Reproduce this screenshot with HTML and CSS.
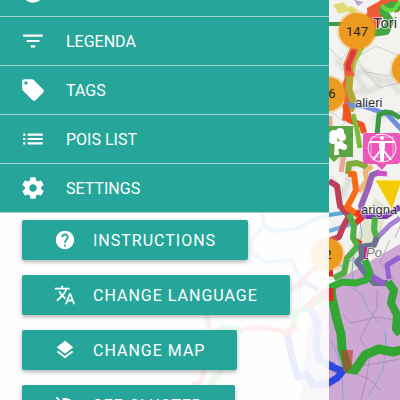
FILE: index.html
```html
<!DOCTYPE html>
<html lang="en">
<head>
    <title>Map</title>
    <meta charset="UTF-8">
    <meta name="viewport" content="width=device-width, initial-scale=1.0">
    <link rel="stylesheet" href="styles.css">
</head>
<body>
    <svg class="map" viewBox="0 0 400 400" preserveAspectRatio="xMinYMin slice" role="img" aria-label="Map">
        <defs>
            <filter id="soft"><feGaussianBlur stdDeviation="2"/></filter>
        </defs>
        <rect width="400" height="400" fill="#f2f2ef"/>
        <g filter="url(#soft)" fill="none" stroke="#dcdcd5" stroke-width="5">
            <path d="M348 75q14-8 26 2t20-6M352 92q20 2 28-8t20 10M335 60l18 12 14 20M372 120l20-8M332 150l20 20-10 30M0 240l25-8 20 10M10 290l30 12"/>
        </g>
        <path d="M355 240l20-42 14 10-16 44-28 26-15 2z" fill="#e1e4cf"/>
        <path d="M329 285L400 244V400H329L300 400L308 330z" fill="#cda8d2"/>
        <path d="M333 5l10-3 8 8-12 4zM345 10l6-4 7 4-5 5z" fill="#e2da72"/>
        <path d="M354 0l10 2-6 4z" fill="#b9a4cf"/>

        <!-- minor roads and streams -->
        <g class="roads">
            <path class="light" d="M329 48l12 12 8-10M352 60l24-14 24 10M341 70l16-7 23 25 20-6M358 60l8 12 22 4M331 112l14 10-10 14M331 175l12 14-6 20M345 178l20 12M360 100l26 16 14-4"/>
            <path d="M377 290v18l-9 15-8 16 10 14-3 23-6 24M329 368l39-3 32-6M329 373l20-2 20 8 12 12M343 314l7 9 28-6 22 4M390 240l-10 22 14 18M400 226l-5 12"/>
            <path class="light" d="M230 335l-22 32 34 30M270 345l20 40M90 240l40 20 20-10M110 330l60 12M60 290l30 18 20 30"/>
        </g>
        <g class="rivers">
            <path d="M353 288l10 8 4 12 8 10 5 5M385 330l1 16-3 24-8 15-7 12M331 340l6 14 5 14 1 32M352 232l8-12 2 16-8 14-2 22 3 16M329 260l12 6 14-8"/>
        </g>

        <!-- cycle routes -->
        <g class="routes">
            <path d="M329 24h14" stroke="#459845" stroke-width="4"/>
            <path d="M262 214l3 12 7 5 28-3 10-7 19-6 20-3" stroke="#5aa5dc" stroke-width="4"/>
            <path d="M262 228l-10 12-1 12 14 10 27-2 8 18M329 231l23-7" stroke="#72b2e2" stroke-width="4"/>
            <path d="M336 255l-8 1-38 35M206 314l4 16M205 370l-5 12-8 2" stroke="#dc5870" stroke-width="5"/>
            <path d="M290 291l15-9 13 8" stroke="#8672ae" stroke-width="5"/>
            <path d="M311 308l7 17-2 20 4 15 14 7" stroke="#4459e5" stroke-width="7"/>
            <path d="M287 333l6 29 5 15 9-3 6 11 14-1 10-6 6-7-14-5" stroke="#2e46df" stroke-width="7"/>
            <path d="M243 331l-20-4-8 5M222 370l-12 15M329 293l-19 14-14 5-4 16-5 5" stroke="#4eba50" stroke-width="6"/>
            <path d="M329 288l-14 10-10 10M297 327l-10 6-9-3-16-2-18 1" stroke="#ee5351" stroke-width="5"/>
            <path d="M358 31l14-17 13-12 10 1 4 8" stroke="#ef5a37" stroke-width="9"/>
            <path d="M367 8l11-6 7 5-7 23-10-6z" fill="#ef5a37"/>
            <path d="M371 33l15-2 4-10-7-10 9-6 8 4" stroke="#44a542" stroke-width="8"/>
            <path d="M382 5q5 8 13 4l5-8" stroke="#62dc3c" stroke-width="4"/>
            <path d="M360 46l-8 14-3 14" stroke="#9dcc3d" stroke-width="10"/>
            <path d="M355 48l-7 17 1 12" stroke="#ef7449" stroke-width="9"/>
            <path d="M355 48l-7 17 1 12" stroke="#d83939" stroke-width="5"/>
            <path d="M351 72l-5 14 2 15 -2 20" stroke="#ef6038" stroke-width="8"/>
            <path d="M350 76l-1 14 5 13-4 8" stroke="#b3a738" stroke-width="7"/>
            <path d="M346 105l17 1 12 4 12 4 15 16" stroke="#6d91dc" stroke-width="5"/>
            <path d="M377 135l2-20 6-3 7 1 8 5" stroke="#3b9a46" stroke-width="5"/>
            <path d="M345 104l4 16 13 5 2 8" stroke="#ed5420" stroke-width="6"/>
            <path d="M353 114l4 16 3 18" stroke="#82bb3c" stroke-width="5"/>
            <path d="M330 116v18M344 154l-3 18" stroke="#eba895" stroke-width="5"/>
            <path d="M329 181l8 5 3 20 9 10-6 11-4 10-10 4" stroke="#bd4058" stroke-width="6"/>
            <path d="M348 174l1-10 8-1 8 3 3 5" stroke="#83ac39" stroke-width="6"/>
            <path d="M372 166l-7 6 2 8-8 12" stroke="#f1b574" stroke-width="5"/>
            <path d="M348 174h6l2 16-5 10-4 7 12 9" stroke="#f66b17" stroke-width="6"/>
            <path d="M364 216l-8-4M352 226l13-11M354 240l7 4" stroke="#e83520" stroke-width="6"/>
            <path d="M380 172l-8 3-4 13-7 18 5 12" stroke="#9764b8" stroke-width="6"/>
            <path d="M377 173l10 1" stroke="#d44bcb" stroke-width="5"/>
            <path d="M366 216l20 0 14-9" stroke="#7d39b0" stroke-width="6"/>
            <path d="M400 218l-10 7-13 13" stroke="#a781d6" stroke-width="5"/>
            <path d="M349 214l5 12-1 12 5 8-11 12-3 15-10 5" stroke="#51ae46" stroke-width="6"/>
            <path d="M375 217l-1 13 3 8" stroke="#4eb34c" stroke-width="6"/>
            <path d="M377 237l-3 8-13 2 1 10-5 5 9 12 8 9h14" stroke="#68748f" stroke-width="6"/>
            <path d="M366 247v12" stroke="#bb2888" stroke-width="4"/>
            <path d="M364 263l6 12 14 9" stroke="#925dd0" stroke-width="6"/>
            <path d="M389 279l-2-14 13-8" stroke="#9461d2" stroke-width="5"/>
            <path d="M329 288l13-6 14 1 10-3 4-7-5-13" stroke="#35ac35" stroke-width="7"/>
            <path d="M388 282l6 8-3 13 6 12-1 14 4 5" stroke="#34a338" stroke-width="8"/>
            <path d="M331 288l1 10 4 18 5 18 1 15 6 20 7 1 10-15 14-6 14 3 9-2" stroke="#32a533" stroke-width="9"/>
            <path d="M329 273h4M330 288v13" stroke="#e52620" stroke-width="7"/>
            <path d="M341 350h12l-1 15-4 7h-4z" fill="#b93f2e" opacity=".65"/>
        </g>

        <g class="places">
            <text x="373" y="28" class="city">Tori</text>
            <text x="355" y="107">alieri</text>
            <text x="361" y="214">arigna</text>
            <text x="366" y="257" class="river-name">Po</text>
        </g>

        <!-- clusters -->
        <g class="clusters">
            <circle cx="357" cy="31" r="20" class="halo"/>
            <circle cx="328" cy="94" r="19" class="halo"/>
            <circle cx="409" cy="69" r="19" class="halo"/>
            <circle cx="327" cy="254" r="18" class="halo"/>
            <circle cx="357" cy="31" r="18"/>
            <circle cx="328" cy="94" r="17"/>
            <circle cx="409" cy="69" r="17"/>
            <circle cx="327" cy="254" r="16"/>
            <text x="357" y="36">147</text>
            <text x="332" y="98">6</text>
            <text x="328" y="259">2</text>
        </g>

        <!-- poi markers -->
        <g>
            <path d="M320 126h33v31h-14l-5 5-5-5h-9z" fill="#5da444"/>
            <circle cx="334" cy="135" r="5" fill="#fff"/>
            <circle cx="340" cy="132" r="4" fill="#fff"/>
            <circle cx="342" cy="137" r="4" fill="#fff"/>
            <circle cx="333" cy="140" r="4" fill="#fff"/>
            <circle cx="340" cy="145" r="4" fill="#fff"/>
            <circle cx="344" cy="147" r="3" fill="#fff"/>
            <path d="M335 138h2l1 8 1 9h-5z" fill="#fff"/>
            <path d="M365 133h33q2 0 2 2v26q0 3-3 3h-10l-5 6-6-6h-10q-3 0-3-3v-26q0-2 2-2z" fill="#ed57b9"/>
            <circle cx="382" cy="148" r="14" fill="none" stroke="#fff" stroke-width="1"/>
            <path d="M371 137h22v20h-22z" fill="none" stroke="#fff" stroke-width="1" opacity=".5"/>
            <circle cx="382" cy="138" r="2" fill="#fff"/>
            <path d="M369 142h26" fill="none" stroke="#fff" stroke-width="2"/>
            <path d="M379 141h6v6l-1 5h-4l-1-5z" fill="#fff"/>
            <path d="M380 151l-7 9M384 151l7 9M381 151v10M383 151v10" fill="none" stroke="#fff" stroke-width="2"/>
            <path d="M375 180h27l-10 30z" fill="#f5ca07" stroke="#fff4c3"/>
        </g>
    </svg>

    <aside class="sidebar">
        <nav class="menu">
            <a href="#info" class="menu-item" aria-label="Info">
                <svg class="icon" viewBox="0 0 24 24"><circle cx="12" cy="12" r="10"/></svg>
            </a>
            <a href="#legenda" class="menu-item">
                <svg class="icon" viewBox="0 0 24 24"><path d="M10 18h4v-2h-4v2zM3 6v2h18V6H3zm3 7h12v-2H6v2z"/></svg>
                LEGENDA
            </a>
            <a href="#tags" class="menu-item">
                <svg class="icon" viewBox="0 0 24 24"><path d="M21.41 11.58l-9-9C12.05 2.22 11.55 2 11 2H4c-1.1 0-2 .9-2 2v7c0 .55.22 1.05.59 1.42l9 9c.36.36.86.58 1.41.58s1.05-.22 1.41-.59l7-7c.37-.36.59-.86.59-1.41s-.23-1.06-.59-1.42zM5.5 7C4.67 7 4 6.33 4 5.5S4.67 4 5.5 4 7 4.67 7 5.5 6.33 7 5.5 7z"/></svg>
                TAGS
            </a>
            <a href="#pois" class="menu-item">
                <svg class="icon" viewBox="0 0 24 24"><path d="M3 13h2v-2H3v2zm0 4h2v-2H3v2zm0-8h2V7H3v2zm4 4h14v-2H7v2zm0 4h14v-2H7v2zM7 7v2h14V7H7z"/></svg>
                POIS LIST
            </a>
            <a href="#settings" class="menu-item">
                <svg class="icon" viewBox="0 0 24 24"><path d="M19.43 12.98c.04-.32.07-.64.07-.98s-.03-.66-.07-.98l2.11-1.65c.19-.15.24-.42.12-.64l-2-3.46c-.12-.22-.39-.3-.61-.22l-2.49 1c-.52-.4-1.08-.73-1.69-.98l-.38-2.65C14.46 2.18 14.25 2 14 2h-4c-.25 0-.46.18-.49.42l-.38 2.65c-.61.25-1.17.59-1.69.98l-2.49-1c-.23-.09-.49 0-.61.22l-2 3.46c-.13.22-.07.49.12.64l2.11 1.65c-.04.32-.07.65-.07.98s.03.66.07.98l-2.11 1.65c-.19.15-.24.42-.12.64l2 3.46c.12.22.39.3.61.22l2.49-1c.52.4 1.08.73 1.69.98l.38 2.65c.03.24.24.42.49.42h4c.25 0 .46-.18.49-.42l.38-2.65c.61-.25 1.17-.59 1.69-.98l2.49 1c.23.09.49 0 .61-.22l2-3.46c.12-.22.07-.49-.12-.64l-2.11-1.65zM12 15.5c-1.93 0-3.5-1.57-3.5-3.5s1.57-3.5 3.5-3.5 3.5 1.57 3.5 3.5-1.57 3.5-3.5 3.5z"/></svg>
                SETTINGS
            </a>
        </nav>
        <div class="actions">
            <button type="button" class="btn">
                <svg class="icon" viewBox="0 0 24 24"><path d="M12 2C6.48 2 2 6.48 2 12s4.48 10 10 10 10-4.48 10-10S17.52 2 12 2zm1 17h-2v-2h2v2zm2.07-7.75l-.9.92C13.45 12.9 13 13.5 13 15h-2v-.5c0-1.1.45-2.1 1.17-2.83l1.24-1.26c.37-.36.59-.86.59-1.41 0-1.1-.9-2-2-2s-2 .9-2 2H8c0-2.21 1.79-4 4-4s4 1.79 4 4c0 .88-.36 1.68-.93 2.25z"/></svg>
                INSTRUCTIONS
            </button>
            <button type="button" class="btn">
                <svg class="icon" viewBox="0 0 24 24"><path d="M12.87 15.07l-2.54-2.51.03-.03c1.74-1.94 2.98-4.17 3.71-6.53H17V4h-7V2H8v2H1v1.99h11.17C11.5 7.92 10.44 9.75 9 11.35 8.07 10.32 7.3 9.19 6.69 8h-2c.73 1.63 1.73 3.17 2.98 4.56l-5.09 5.02L4 19l5-5 3.11 3.11.76-2.04zM18.5 10h-2L12 22h2l1.12-3h4.75L21 22h2l-4.5-12zm-2.62 7l1.62-4.33L19.12 17h-3.24z"/></svg>
                CHANGE LANGUAGE
            </button>
            <button type="button" class="btn">
                <svg class="icon" viewBox="0 0 24 24"><path d="M11.99 18.54l-7.37-5.73L3 14.07l9 7 9-7-1.63-1.27-7.38 5.74zM12 16l7.36-5.73L21 9l-9-7-9 7 1.63 1.27L12 16z"/></svg>
                CHANGE MAP
            </button>
            <button type="button" class="btn">
                <svg class="icon" viewBox="0 0 24 24"><path d="M2 4.3L3.3 3 21 20.7 19.7 22zM8.5 5C9.6 4.5 10.8 4.3 12 4.3c5 0 9.3 3.1 11 7.5-.7 1.8-1.9 3.3-3.4 4.5z"/></svg>
                SEE CLUSTER
            </button>
        </div>
    </aside>
</body>
</html>
```

FILE: styles.css
```css
body {
    margin: 0;
    height: 100vh;
    overflow: hidden;
    font-family: Roboto, sans-serif;
}
.map {
    position: absolute;
    top: 0;
    left: 0;
    width: 100%;
    height: 100%;
}
.roads path {
    fill: none;
    stroke: #8c7b91;
    stroke-width: 1;
    opacity: 0.5;
}
.roads .light {
    stroke: #a9a9a9;
}
.rivers path {
    fill: none;
    stroke: #85a5d8;
    stroke-width: 1;
}
.routes path {
    stroke-linejoin: round;
}
.routes path:not([fill]) {
    fill: none;
}
.places text {
    font-family: "Liberation Sans", sans-serif;
    font-size: 13px;
    fill: #333;
    stroke: rgba(255, 255, 255, 0.6);
    stroke-width: 2;
    paint-order: stroke;
}
.places .city {
    font-size: 15px;
}
.places .river-name {
    font-style: italic;
    fill: #777;
}
.clusters circle {
    fill: #ed9a20;
}
.clusters .halo {
    opacity: 0.3;
}
.clusters text {
    font-size: 13px;
    text-anchor: middle;
    fill: #222;
}
.sidebar {
    position: relative;
    width: 90%;
    max-width: 329px;
    height: 100%;
    overflow: hidden;
    background-color: rgba(255, 255, 255, 0.9);
}
/* the list is scrolled, the first row is partly out of view */
.menu {
    margin-top: -32px;
}
.menu-item {
    display: flex;
    align-items: center;
    gap: 20px;
    height: 48px;
    padding-left: 20px;
    border-bottom: 1px solid #a4d3cd;
    background-color: #26a69a;
    color: #fff;
    font-size: 16px;
    text-decoration: none;
}
.icon {
    flex: none;
    width: 26px;
    height: 26px;
    fill: #fff;
}
.actions {
    display: flex;
    flex-direction: column;
    align-items: flex-start;
    gap: 15px;
    padding: 7px 22px;
}
.btn {
    display: flex;
    align-items: center;
    gap: 17px;
    height: 40px;
    padding: 0 32px;
    border: none;
    border-radius: 2px;
    background-color: #26a69a;
    color: #fff;
    font-family: inherit;
    font-size: 16px;
    letter-spacing: 1px;
    white-space: nowrap;
    box-shadow: 0 2px 4px rgba(0, 0, 0, 0.3);
    cursor: pointer;
}
.btn .icon {
    width: 22px;
    height: 22px;
}
```
